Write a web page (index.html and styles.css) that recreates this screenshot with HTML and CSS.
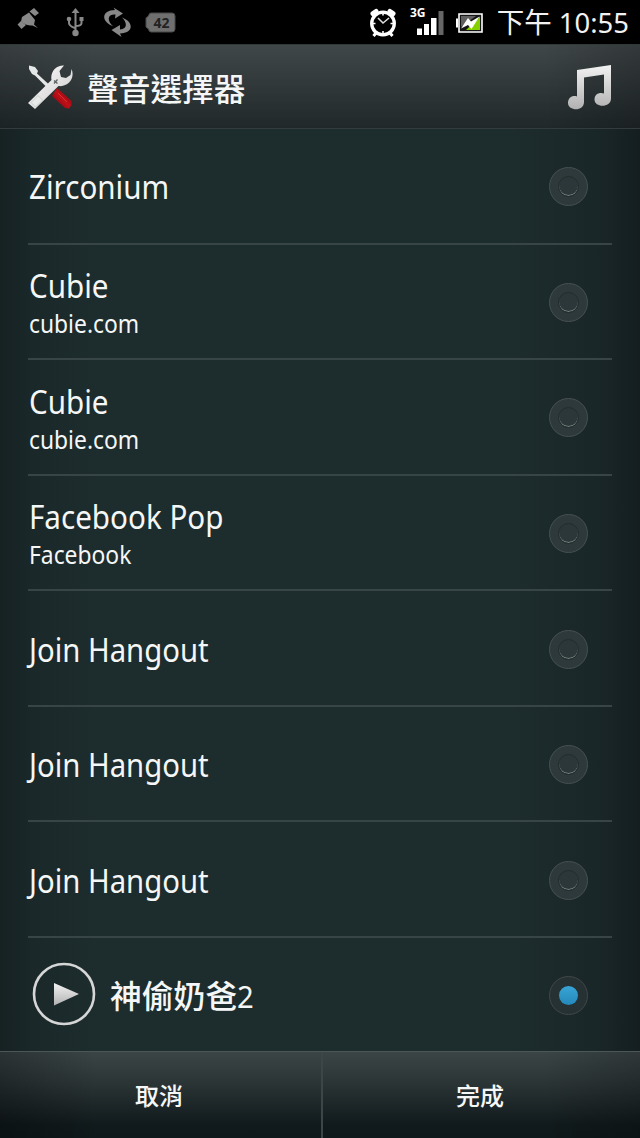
FILE: index.html
```html
<!DOCTYPE html>
<html lang="zh-Hant">
<head>
<meta charset="utf-8">
<title>聲音選擇器</title>
<link rel="stylesheet" href="styles.css">
</head>
<body>
<div class="screen">
  <div class="status">
    <svg class="status-left" width="180" height="44" viewBox="0 0 180 44">
      <g fill="#888">
        <path d="M22 17L29 12.500L35 20L34 24.500L38 28L32.500 25.500Q26 26 21 21.500Z"/>
        <path d="M29.500 11.500L34 8L39 13L35 16ZM17.500 24.500L21 21L26 25L21.500 29Z"/>
      </g>
      <g stroke="#888" stroke-width="2" fill="none">
        <path d="M75.500 12v22M69 19v4q0 3 6 5M81.500 18v5q0 3-6 3"/>
        <path d="M75.500 8l4 5h-8z" fill="#888" stroke="none"/>
        <circle cx="75.500" cy="33" r="3.200" fill="#888" stroke="none"/>
        <circle cx="69" cy="19" r="2.300" fill="#888" stroke="none"/>
        <path d="M79.500 17h4v4h-4z" fill="#888" stroke="none"/>
      </g>
      <g fill="#888">
        <path d="M113 26C101 22 101 10 115 10L113.500 7.500L123 13.500L115 18.500L115.500 14.500C107 14 107 21 113 26Z"/>
        <path d="M122 17.500C134 22 134 33 120 33.500L121.500 37L111.500 30L120 25L120 29.500C128 29 127 22 122 17.500Z"/>
      </g>
      <path d="M151 13h21q3 0 3 3v13q0 3-3 3h-21q-2 0-2.500-3l-2.500-2v-9l2.500-2q.5-3 2.500-3z" fill="#6f6f6f" stroke="#4b4b4b" stroke-width="1"/>
      <text class="level" x="161.500" y="27.500" text-anchor="middle">42</text>
    </svg>
    <div class="status-right">
      <svg width="130" height="44" viewBox="360 0 130 44">
        <g fill="none" stroke="#fff">
          <circle cx="383" cy="23.500" r="11.300" stroke-width="3.300"/>
          <path d="M373 13.500l3-2M393 13.500l-3-2" stroke-width="5" stroke-linecap="round"/>
          <path d="M376 33l-2.500 3M390 33l2.500 3" stroke-width="3"/>
          <path d="M378 18l5 5 6-5" stroke-width="1.600" stroke="#ddd"/>
          <path d="M383 13v2.500M383 31v3M373 23.500h2.500M390.500 23.500h2.500" stroke-width="1.600"/>
        </g>
        <text class="network" x="410" y="17">3G</text>
        <path d="M417 28.500h5v6.500h-5zM424 24h5v11h-5zM431 18h5.500v17H431z" fill="#fff"/>
        <path d="M438.500 11h5v24h-5z" fill="#666"/>
        <path d="M459 14h23v18H459z" fill="#151515" stroke="#fff" stroke-width="1.600"/>
        <path d="M456 18.500h2v9h-2z" fill="#fff"/>
        <path d="M461 16h15L461 27z" fill="#606060"/>
        <path d="M480 16.500V30H466z" fill="#85cf00"/>
        <path d="M461 28.500L468 18L471 21.500L479.500 16.500L471.500 29L468 25Z" fill="#fff"/>
      </svg>
      <span class="clock">下午 10:55</span>
    </div>
  </div>

  <header class="header">
    <svg class="tools" width="48" height="48" viewBox="26 63 48 48">
      <defs>
        <linearGradient id="metal" x1="0" y1="0" x2="1" y2="1"><stop offset="0" stop-color="#fff"/><stop offset="1" stop-color="#c9c9c9"/></linearGradient>
        <linearGradient id="grip" x1="0" y1="1" x2="1" y2="0"><stop offset="0" stop-color="#70000a"/><stop offset=".5" stop-color="#c01018"/><stop offset="1" stop-color="#75000a"/></linearGradient>
      </defs>
      <path d="M29 65.500L35 67L38 71L37 73.500L49 84.500L46.500 87L35 75.500L32 74L29 69Z" fill="#e4e7e7"/>
      <path d="M57 88L71.500 101V105L69 108.500L65 108L52 96Z" fill="url(#grip)"/>
      <path d="M58 93l9 9" stroke="#e03a3a" stroke-width=".8"/>
      <path d="M28 103L51.500 80C50 72 56 65 64 65.500L59.500 71L61 77L66 78L70.500 75L71.500 69C75.500 78 68 87.500 58.500 86L35 109Z" fill="url(#metal)"/>
      <path d="M31 102.500l7-7 4.500 4.500-7 7z" fill="#e7e9e9" stroke="#bfc2c2" stroke-width=".7"/>
      <path d="M54 80.500l3.500 3M57.500 79.500l-3.500 4" stroke="#5d6363" stroke-width="1.300"/>
    </svg>
    <h1 class="title">聲音選擇器</h1>
    <svg class="note" width="46" height="48" viewBox="567 62 46 48">
      <defs><linearGradient id="silver" x1="0" y1="0" x2="0" y2="1"><stop offset="0" stop-color="#f3f3f3"/><stop offset="1" stop-color="#b1b1b1"/></linearGradient></defs>
      <path d="M577 69L611 64V97.500C611 107 594.500 107 594.500 98.500C594.500 92.500 600 91 604 92.500V73.500L584 76.500V101C584 111 568 110 568 102C568 96 573 94 577 95.500Z" fill="url(#silver)"/>
    </svg>
  </header>

  <main class="list">
    <div class="row"><div class="label"><span class="name">Zirconium</span></div><i class="radio"></i></div>
    <div class="row"><div class="label two-line"><span class="name">Cubie</span><span class="sub">cubie.com</span></div><i class="radio"></i></div>
    <div class="row"><div class="label two-line"><span class="name">Cubie</span><span class="sub">cubie.com</span></div><i class="radio"></i></div>
    <div class="row"><div class="label two-line"><span class="name">Facebook Pop</span><span class="sub">Facebook</span></div><i class="radio"></i></div>
    <div class="row"><div class="label"><span class="name name-tight">Join Hangout</span></div><i class="radio"></i></div>
    <div class="row"><div class="label"><span class="name name-tight">Join Hangout</span></div><i class="radio"></i></div>
    <div class="row"><div class="label"><span class="name name-tight">Join Hangout</span></div><i class="radio"></i></div>
    <div class="row row-play">
      <svg class="play" width="66" height="66" viewBox="0 0 66 66">
        <circle cx="33" cy="32" r="30" fill="none" stroke="#d6d6d6" stroke-width="2.600"/>
        <path d="M23 21L48 32L23 43.500Z" fill="url(#silver)"/>
      </svg>
      <div class="label"><span class="name name-cjk">神偷奶爸<span class="digit">2</span></span></div><i class="radio radio-on"></i>
    </div>
  </main>

  <footer class="actions">
    <div class="action">取消</div>
    <div class="action">完成</div>
  </footer>
</div>
</body>
</html>
```

FILE: styles.css
```css
* { box-sizing: border-box; }
body { margin: 0; background: #000; }
.screen {
  width: 640px; height: 1138px; overflow: hidden;
  display: flex; flex-direction: column;
  color: #f5f7f7;
  font-family: "Noto Sans", "Noto Sans CJK TC", sans-serif;
}
.status { height: 44px; background: #000; display: flex; justify-content: space-between; flex: none; }
.status svg { flex: none; display: block; }
.level { font: bold 14px "Noto Sans", sans-serif; fill: #222; }
.network { font: bold 12px "Noto Sans", sans-serif; fill: #fff; }
.status-right { display: flex; width: 280px; }
.clock {
  font-size: 28px; line-height: 44px; padding-left: 7px; white-space: nowrap;
  color: #f2f2f2; transform: scaleX(.98); transform-origin: 0 50%;
}
.header {
  height: 85px; flex: none; display: flex; align-items: center; padding: 0 27px 0 26px;
  background: linear-gradient(90deg, #0002, #0000 15%, #0000 85%, #0003), linear-gradient(#404748, #20282a);
  border-top: 1px solid #303838; border-bottom: 1px solid #343b3e;
}
.tools, .note { flex: none; }
.title {
  margin: 0 auto 0 13px; font-size: 31.7px; line-height: 48px; font-weight: 500;
  font-family: "Noto Sans CJK TC", sans-serif;
}
.list {
  height: 922px; flex: none; padding: 0 28px;
  background: linear-gradient(90deg, #162122, #1a2829 5%, #1d2c2d 15%, #1d2c2d 80%, #1a2728 93%, #141e20);
}
.row { height: 115.57px; display: flex; align-items: center; border-bottom: 2px solid #384547; padding: 2px 24px 0 0; }
.row:last-child { border-bottom: 0; height: 113px; }
.label { flex: 1; display: flex; flex-direction: column; align-items: flex-start; padding: 1px 0 0 1px; }
.two-line { padding-top: 3px; }
.name, .sub { transform: scaleX(.925); transform-origin: 0 50%; white-space: nowrap; }
.name { font-size: 32px; line-height: 40px; }
.name-tight { transform: scaleX(.915); }
.sub { font-size: 24.7px; line-height: 35px; }
.name-cjk { font-weight: 500; font-size: 31.8px; transform: none; }
.digit { display: inline-block; font-weight: 400; transform: scaleX(.92); transform-origin: 0 50%; }
.play { flex: none; margin: 0 12px 0 3px; }
.radio {
  width: 39px; height: 39px; flex: none; border-radius: 50%;
  border: 1px solid #465052; background: #2d393a;
  display: flex; align-items: center; justify-content: center;
}
.radio::after {
  content: ""; width: 19px; height: 19px; border-radius: 50%;
  background: #2b3738; border: 1px solid #222c2d; box-shadow: inset 0 -1px 0 #758081;
}
.radio-on { border-color: #424748; background: #253132; }
.radio-on::after { background: linear-gradient(#38a5d6, #2588ba); border: 0; box-shadow: none; }
.actions {
  height: 87px; flex: none; display: flex;
  background: linear-gradient(90deg, #0004, #0000 15%, #0000 85%, #0003), linear-gradient(#3b4546, #2c3536 35%, #10191b 85%, #0f181a);
  border-top: 1px solid #4b5657;
}
.action {
  width: 321px; padding-right: 3px; text-align: center; font-size: 24px; line-height: 85px;
  font-family: "Noto Sans CJK TC", sans-serif; font-weight: 500;
}
.action + .action { width: 319px; border-left: 2px solid #3b4647; }
```
